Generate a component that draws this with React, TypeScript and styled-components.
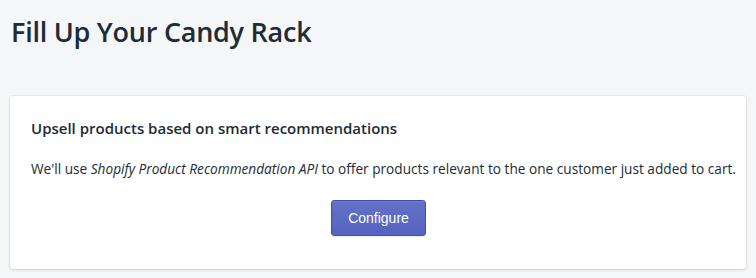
import React from "react";
import styled, { createGlobalStyle } from "styled-components";

const Global = createGlobalStyle`
  html, body { margin: 0; padding: 0; background: #f4f6f8; }
  body { font-family: "Open Sans", "Noto Sans", sans-serif; color: #212b36; }
`;

const Page = styled.div`
  padding: 10px 10px 8px 10px;
  display: flex;
  flex-direction: column;
`;

const Title = styled.h1`
  margin: 0;
  padding-left: 1px;
  font-size: 27px;
  line-height: 44px;
  font-weight: 600;
  color: #212b36;
  letter-spacing: -0.25px;
`;

const Card = styled.section`
  margin-top: 42px;
  background: #fff;
  border-radius: 3px;
  box-shadow: 0 0 0 1px rgba(63, 63, 68, 0.05), 0 1px 3px 0 rgba(63, 63, 68, 0.15);
  padding: 20px 8px 33px 21px;
  display: flex;
  flex-direction: column;
`;

const CardTitle = styled.h2`
  margin: 0;
  font-size: 15px;
  line-height: 24px;
  font-weight: 600;
  color: #212b36;
`;

const Text = styled.p`
  margin: 19px 0 0 0;
  font-size: 13.65px;
  line-height: 20px;
  color: #212b36;
  white-space: nowrap;
  em { font-style: italic; }
`;

const Actions = styled.div`
  display: flex;
  justify-content: center;
  margin-top: 21px;
  padding-right: 12px;
`;

const Button = styled.button`
  width: 95px;
  height: 36px;
  font-family: "Liberation Sans", Arial, sans-serif;
  font-size: 14px;
  color: #fff;
  background: linear-gradient(180deg, #6371c7, #5563c1);
  border: 1px solid #3f4eae;
  border-radius: 3px;
  box-shadow: inset 0 1px 0 0 #6f7bcb, 0 1px 0 0 rgba(22, 29, 37, 0.05);
  cursor: pointer;
`;

export default function App() {
  return (
    <>
      <Global />
      <Page>
        <Title>Fill Up Your Candy Rack</Title>
        <Card>
          <CardTitle>Upsell products based on smart recommendations</CardTitle>
          <Text>
            We'll use <em>Shopify Product Recommendation API</em> to offer products relevant to the one customer just added to cart.
          </Text>
          <Actions>
            <Button>Configure</Button>
          </Actions>
        </Card>
      </Page>
    </>
  );
}
